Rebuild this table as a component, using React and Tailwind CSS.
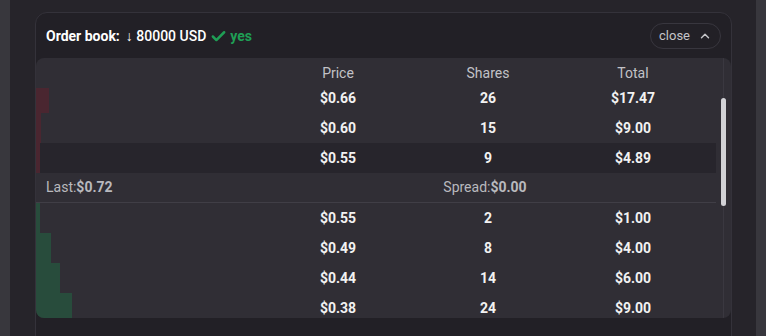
import { Check, ChevronUp } from "lucide-react";

const asks = [
  { price: "$0.66", shares: 26, total: "$17.47", depth: 13 },
  { price: "$0.60", shares: 15, total: "$9.00", depth: 5 },
  { price: "$0.55", shares: 9, total: "$4.89", depth: 4, active: true },
];

const bids = [
  { price: "$0.55", shares: 2, total: "$1.00", depth: 4 },
  { price: "$0.49", shares: 8, total: "$4.00", depth: 15 },
  { price: "$0.44", shares: 14, total: "$6.00", depth: 24 },
  { price: "$0.38", shares: 24, total: "$9.00", depth: 36 },
];

const cols = "w-[680px] grid grid-cols-[227px_150px_150px_140px_13px]";

function Row({ row, side }) {
  return (
    <div className={`${cols} h-[30px] items-center ${row.active ? "bg-[#27252c]" : ""}`}>
      <div className="h-full flex">
        <div
          className={side === "ask" ? "h-full bg-[#4a2630]" : "h-full bg-[#284c3c]"}
          style={{ width: row.depth }}
        />
      </div>
      <div className="text-center font-bold text-[#f2f2f2]">{row.price}</div>
      <div className="text-center font-bold text-[#f2f2f2]">{row.shares}</div>
      <div className="text-center font-bold text-[#f2f2f2]">{row.total}</div>
      <div />
    </div>
  );
}

export default function App() {
  return (
    <div className="w-[766px] h-[336px] overflow-hidden flex bg-[#26242a] text-[14px]" style={{ fontFamily: "Roboto, 'Liberation Sans', sans-serif" }}>
      <div className="w-[10px] h-full bg-[#38373d]" />
      <div className="flex-1 pl-[25px] pr-[24px] pt-[12px]">
        <div className="h-[340px] rounded-xl border border-[#34323a] bg-[#222026] flex flex-col">
          <div className="h-[45px] flex items-center justify-between pl-[10px] pr-[10px] pt-[1px]">
            <div className="flex items-center text-white">
              <span className="font-bold">Order book:</span>
              <span className="ml-[6px] font-medium">↓ 80000 USD</span>
              <Check className="ml-[4px] w-[17px] h-[17px] text-[#1f9e55]" strokeWidth={3.5} />
              <span className="ml-[3px] font-bold text-[#1f9e55]">yes</span>
            </div>
            <button className="h-[26px] w-[71px] rounded-full border border-[#38363e] flex items-center justify-center gap-[8px] text-[13px] text-[#c4c4c8]">
              close
              <ChevronUp className="w-[14px] h-[14px]" strokeWidth={2.5} />
            </button>
          </div>
          <div className="h-[260px] rounded-lg bg-[#302e35] flex flex-col overflow-hidden relative">
            <div className={`${cols} h-[30px] items-center text-[#c2c2c7]`}>
              <div />
              <div className="text-center">Price</div>
              <div className="text-center">Shares</div>
              <div className="text-center">Total</div>
              <div />
            </div>
            <div className="h-[230px] overflow-hidden">
              <div className="-mt-[5px]">
                {asks.map((r) => (
                  <Row key={"a" + r.price} row={r} side="ask" />
                ))}
                <div className={`${cols} h-[30px] items-center border-b border-[#403e46] text-[#b9b9be]`}>
                  <div className="col-span-2 pl-[10px]">
                    Last:<span className="font-bold">$0.72</span>
                  </div>
                  <div className="text-center -ml-[6px]">
                    Spread:<span className="font-bold">$0.00</span>
                  </div>
                  <div />
                  <div />
                </div>
                {bids.map((r) => (
                  <Row key={"b" + r.price} row={r} side="bid" />
                ))}
              </div>
            </div>
            <div className="absolute top-0 right-[7px] w-px h-full bg-[#3a3840]" />
            <div className="absolute top-[40px] right-[5px] w-[5px] h-[108px] rounded-full bg-[#d2d2d6]" />
          </div>
        </div>
      </div>
      <div className="w-[10px] h-full bg-[#38373d]" />
    </div>
  );
}
